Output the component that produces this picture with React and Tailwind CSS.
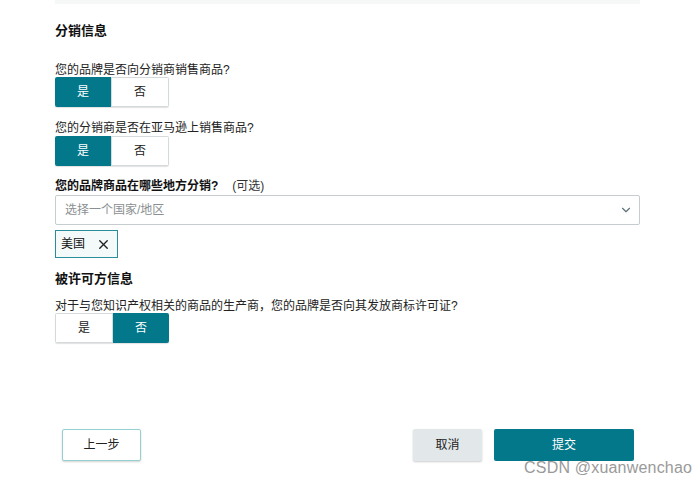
import { X, ChevronDown } from 'lucide-react'

const font = { fontFamily: '"Liberation Sans", "Noto Sans CJK SC", sans-serif' }

function YesNo({ value }) {
  const on = 'bg-[#02788a] text-white'
  const off = 'bg-white text-[#222] border border-[#d5dbdc]'
  return (
    <div className="flex w-[114px] h-[30px] rounded-[2px] overflow-hidden shadow-[0_1px_1px_rgba(0,0,0,0.12)] text-[12px]">
      <div className={`flex-1 flex items-center justify-center ${value === 'yes' ? on : off}`}>是</div>
      <div className={`flex-1 flex items-center justify-center ${value === 'no' ? on : off}`}>否</div>
    </div>
  )
}

export default function App() {
  return (
    <div className="w-[700px] h-[484px] bg-white relative" style={font}>
      <div className="ml-[55px] w-[585px] h-[4px] bg-[#f6f7f7]" />
      <div className="pl-[55px] pr-[60px]">
        <h2 className="mt-[19px] text-[13px] font-bold text-[#111] leading-[16px]">分销信息</h2>

        <p className="mt-[24px] text-[12px] text-[#222] leading-[14px]">您的品牌是否向分销商销售商品?</p>
        <YesNo value="yes" />

        <p className="mt-[14px] text-[12px] text-[#222] leading-[14px]">您的分销商是否在亚马逊上销售商品?</p>
        <div className="mt-[1px]"><YesNo value="yes" /></div>

        <p className="mt-[13px] text-[12px] text-[#111] leading-[14px]">
          <span className="font-bold">您的品牌商品在哪些地方分销?</span>
          <span className="ml-[14px] text-[#333]">(可选)</span>
        </p>
        <div className="mt-[2px] w-[585px] h-[30px] border border-[#c5cdcf] rounded-[2px] flex items-center justify-between pl-[9px] pr-[6px]">
          <span className="text-[12px] text-[#8a8f91]">选择一个国家/地区</span>
          <ChevronDown size={14} strokeWidth={2} className="text-[#5e7277]" />
        </div>
        <div className="mt-[5px] w-[63px] h-[28px] border border-[#2a8e98] bg-[#f4f9f9] flex items-center pl-[5px] gap-[11px] text-[12px] text-[#111]">
          <span>美国</span>
          <X size={15} strokeWidth={2.2} className="text-[#222]" />
        </div>

        <h2 className="mt-[13px] text-[13px] font-bold text-[#111] leading-[16px]">被许可方信息</h2>
        <p className="mt-[12px] text-[12px] text-[#222] leading-[14px]">对于与您知识产权相关的商品的生产商，您的品牌是否向其发放商标许可证?</p>
        <YesNo value="no" />
      </div>

      <div className="flex items-center mt-[86px] pl-[62px]">
        <button className="w-[79px] h-[32px] border border-[#97d0d1] rounded-[2px] bg-white text-[12px] text-[#222] shadow-[0_1px_2px_rgba(0,0,0,0.18)]">上一步</button>
        <button className="ml-[272px] w-[69px] h-[32px] rounded-[2px] bg-[#e2e7e9] text-[12px] text-[#222] shadow-[0_1px_2px_rgba(0,0,0,0.2)]">取消</button>
        <button className="ml-[12px] w-[140px] h-[32px] rounded-[2px] bg-[#02788a] text-[12px] text-white">提交</button>
      </div>

      <div className="absolute left-[524px] top-[459px] text-[16px] text-[#9a9a9a] leading-[18px] tracking-[0.2px]" style={{ fontFamily: '"Liberation Sans", sans-serif' }}>
        CSDN @xuanwenchao
      </div>
    </div>
  )
}
